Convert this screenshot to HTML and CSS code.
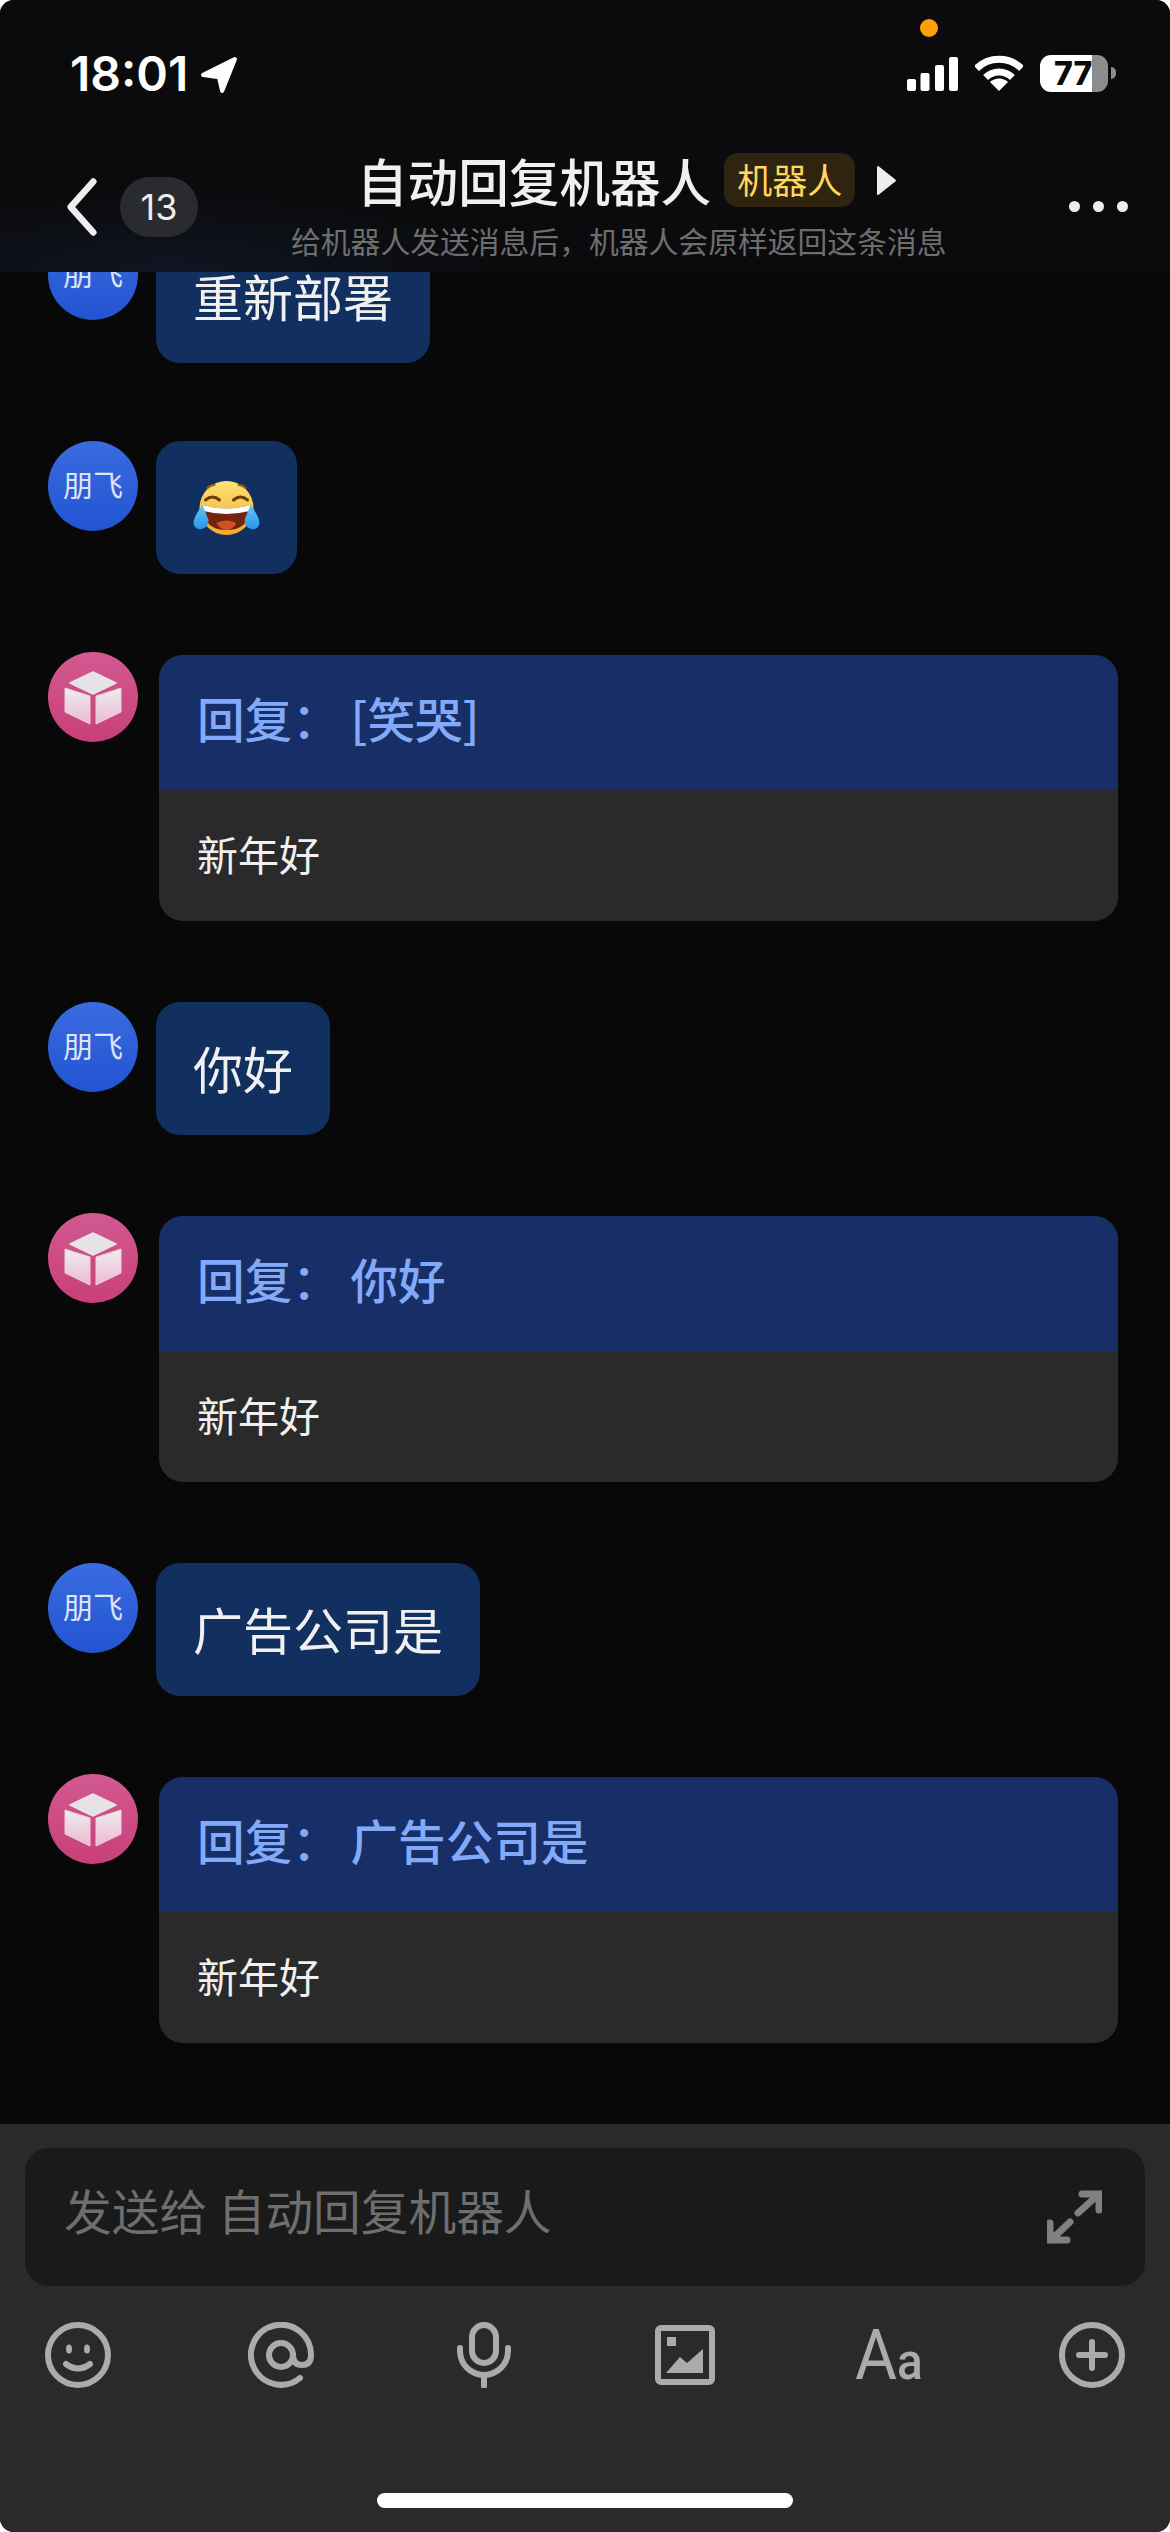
FILE: index.html
```html
<!DOCTYPE html>
<html>
<head>
    <title>自动回复机器人</title>
    <link rel="stylesheet" href="styles.css">
</head>
<body>
    <div class="screen">
        <header class="topbar">
            <div class="status">
                <span class="time">18:01</span>
                <svg class="loc" viewBox="0 0 36 36"><path d="M33 3 3 18l15 2 3 13z" fill="#fff" stroke="#fff" stroke-width="4" stroke-linejoin="round"/></svg>
                <span class="orange-dot"></span>
                <svg class="signal" viewBox="0 0 51 34">
                    <rect x="0" y="22" width="9" height="12" rx="2"/>
                    <rect x="13.500" y="16" width="9" height="18" rx="2"/>
                    <rect x="28" y="8" width="9" height="26" rx="2"/>
                    <rect x="42" y="0" width="9" height="34" rx="2"/>
                </svg>
                <svg class="wifi" viewBox="0 0 48 36">
                    <path d="M1.500 13.500a32 32 0 0 1 45 0" fill="none" stroke="#fff" stroke-width="7"/>
                    <path d="M10.600 22.600a19 19 0 0 1 26.800 0" fill="none" stroke="#fff" stroke-width="7"/>
                    <path d="M24 36 15 27a13 13 0 0 1 18 0z" fill="#fff"/>
                </svg>
                <div class="battery"><span>77</span></div>
                <span class="battery-nub"></span>
            </div>
            <div class="nav">
                <div class="nav-left">
                    <svg class="back" viewBox="0 0 34 62"><path d="M29 4 5 31l24 27" fill="none" stroke="#eee" stroke-width="7" stroke-linecap="round" stroke-linejoin="round"/></svg>
                    <span class="count">13</span>
                </div>
                <div class="nav-center">
                    <div class="title-row">
                        <span class="title">自动回复机器人</span>
                        <span class="tag">机器人</span>
                        <svg class="caret" viewBox="0 0 19 29"><path d="M1 1v27l17-13.500z" fill="#eee" stroke="#eee" stroke-width="2" stroke-linejoin="round"/></svg>
                    </div>
                    <div class="subtitle">给机器人发送消息后，机器人会原样返回这条消息</div>
                </div>
                <div class="more"><i></i><i></i><i></i></div>
            </div>
        </header>

        <main class="chat">
            <div class="msg">
                <div class="avatar avatar-user">朋飞</div>
                <div class="bubble">重新部署</div>
            </div>
            <div class="msg">
                <div class="avatar avatar-user">朋飞</div>
                <div class="bubble bubble-emoji">
                    <svg class="emoji" viewBox="0 0 68 54">
                        <defs>
                            <linearGradient id="face" x1="0" y1="0" x2="0" y2="1"><stop offset="0" stop-color="#fde273"/><stop offset="1" stop-color="#f3a92b"/></linearGradient>
                            <linearGradient id="tear" x1="0" y1="0" x2="0" y2="1"><stop offset="0" stop-color="#62c8f5"/><stop offset="1" stop-color="#2a94ec"/></linearGradient>
                        </defs>
                        <circle cx="34" cy="27" r="27" fill="url(#face)"/>
                        <path d="M15 7q3-3 7-3M46 4q4 0 7 3" fill="none" stroke="#9a6012" stroke-width="2" stroke-linecap="round"/>
                        <path d="M13 19q7-6 14 0M41 19q7-6 14 0" fill="none" stroke="#6b3c0a" stroke-width="3" stroke-linecap="round"/>
                        <path d="M10 24q24 7 48 0 0 25-24 25T10 24z" fill="#73240e"/>
                        <path d="M24 42q10-5 20 0-4 7-10 7t-10-7z" fill="#d4501f"/>
                        <path d="M10 24q24 7 48 0l-1 6q-23 6-46 0z" fill="#fff"/>
                        <path d="M10 24q-9 12-9 18 1 7 8 6 7-1 7-9z" fill="url(#tear)"/>
                        <path d="M58 24q9 12 9 18-1 7-8 6-7-1-7-9z" fill="url(#tear)"/>
                    </svg>
                </div>
            </div>
            <div class="msg msg-bot">
                <div class="avatar avatar-bot">
                    <svg class="cube" viewBox="0 0 90 90">
                        <defs><linearGradient id="cubefill" x1="0" y1="0" x2="0" y2="1"><stop offset="0" stop-color="#eee"/><stop offset="1" stop-color="#eeb9d2"/></linearGradient></defs>
                        <path d="M45 20 68 31 45 42 22 31z" fill="#e6e2e6" stroke="#e6e2e6" stroke-width="1.500" stroke-linejoin="round"/>
                        <path d="M17 36 42 44V72L17 60z" fill="url(#cubefill)" stroke="#e6d0dc" stroke-linejoin="round"/>
                        <path d="M73 36 48 44V72L73 60z" fill="url(#cubefill)" stroke="#e6d0dc" stroke-linejoin="round"/>
                    </svg>
                </div>
                <div class="card">
                    <div class="card-head">回复： [笑哭]</div>
                    <div class="card-body">新年好</div>
                </div>
            </div>
            <div class="msg">
                <div class="avatar avatar-user">朋飞</div>
                <div class="bubble">你好</div>
            </div>
            <div class="msg msg-bot">
                <div class="avatar avatar-bot">
                    <svg class="cube" viewBox="0 0 90 90">
                        <path d="M45 20 68 31 45 42 22 31z" fill="#e6e2e6" stroke="#e6e2e6" stroke-width="1.500" stroke-linejoin="round"/>
                        <path d="M17 36 42 44V72L17 60z" fill="url(#cubefill)" stroke="#e6d0dc" stroke-linejoin="round"/>
                        <path d="M73 36 48 44V72L73 60z" fill="url(#cubefill)" stroke="#e6d0dc" stroke-linejoin="round"/>
                    </svg>
                </div>
                <div class="card">
                    <div class="card-head">回复： 你好</div>
                    <div class="card-body">新年好</div>
                </div>
            </div>
            <div class="msg">
                <div class="avatar avatar-user">朋飞</div>
                <div class="bubble">广告公司是</div>
            </div>
            <div class="msg msg-bot">
                <div class="avatar avatar-bot">
                    <svg class="cube" viewBox="0 0 90 90">
                        <path d="M45 20 68 31 45 42 22 31z" fill="#e6e2e6" stroke="#e6e2e6" stroke-width="1.500" stroke-linejoin="round"/>
                        <path d="M17 36 42 44V72L17 60z" fill="url(#cubefill)" stroke="#e6d0dc" stroke-linejoin="round"/>
                        <path d="M73 36 48 44V72L73 60z" fill="url(#cubefill)" stroke="#e6d0dc" stroke-linejoin="round"/>
                    </svg>
                </div>
                <div class="card">
                    <div class="card-head">回复： 广告公司是</div>
                    <div class="card-body">新年好</div>
                </div>
            </div>
        </main>

        <footer class="composer">
            <div class="input">
                <span class="placeholder">发送给 自动回复机器人</span>
                <svg class="expand" viewBox="0 0 55 54">
                    <path d="M31 23 52 4M35 4H52V20M23 32 4 50M3 33V50H20" fill="none" stroke="#808080" stroke-width="7" stroke-linecap="round" stroke-linejoin="miter"/>
                </svg>
            </div>
            <div class="tools">
                <svg class="tool" viewBox="0 0 66 66">
                    <circle cx="33" cy="33" r="30"/>
                    <ellipse class="solid" cx="24" cy="27" rx="3" ry="4.500"/>
                    <ellipse class="solid" cx="42" cy="27" rx="3" ry="4.500"/>
                    <path d="M21 42q12 9 24 0"/>
                </svg>
                <svg class="tool" viewBox="0 0 66 66">
                    <path d="M52 56A30 30 0 1 1 63 33Q63 43 54 43 45 43 45 33"/>
                    <circle cx="33" cy="33" r="12"/>
                </svg>
                <svg class="tool" viewBox="0 0 66 66">
                    <rect x="21" y="3" width="24" height="38" rx="12"/>
                    <path d="M9 26v3a24 24 0 0 0 48 0v-3M33 54v10"/>
                </svg>
                <svg class="tool" viewBox="0 0 66 66">
                    <rect x="5" y="6" width="54" height="54" rx="3"/>
                    <rect class="solid" x="14" y="15" width="9" height="9"/>
                    <path class="solid" d="M13 51 27 35l7 6 16-14v24z"/>
                </svg>
                <div class="tool-font"><span class="big">A</span><span class="small">a</span></div>
                <svg class="tool" viewBox="0 0 66 66">
                    <circle cx="33" cy="33" r="30"/>
                    <path d="M33 20v26M20 33h26"/>
                </svg>
            </div>
            <div class="home-bar"></div>
        </footer>
    </div>
</body>
</html>
```

FILE: styles.css
```css
body {
    margin: 0;
    background: #fff;
    font-family: "Noto Sans CJK SC", "Liberation Sans", sans-serif;
}

.screen {
    width: 1170px;
    height: 2532px;
    display: flex;
    flex-direction: column;
    overflow: hidden;
    border-radius: 14px;
    background: #080808;
}

/* top bar */
.topbar {
    height: 272px;
    flex-shrink: 0;
    box-sizing: border-box;
    background: radial-gradient(ellipse 340px 80px at 170px 272px, #0f1522, rgba(12, 12, 14, 0) 100%), #0b0b0d;
    position: relative;
    z-index: 2;
}

.status {
    height: 153px;
    box-sizing: border-box;
    padding: 55px 0 0 70px;
    display: flex;
    align-items: flex-start;
    color: #fff;
}

.time {
    font-family: Inter, sans-serif;
    font-weight: 600;
    font-size: 48px;
    line-height: 38px;
    width: 130px;
}

.loc {
    width: 38px;
    height: 38px;
    margin-top: 1px;
}

.orange-dot {
    position: absolute;
    left: 920px;
    top: 19px;
    width: 18px;
    height: 18px;
    border-radius: 50%;
    background: #ff9f0a;
}

.signal {
    width: 51px;
    height: 34px;
    margin: 2px 0 0 669px;
    fill: #fff;
}

.wifi {
    width: 48px;
    height: 36px;
    margin-left: 17px;
}

.battery {
    width: 68px;
    height: 37px;
    margin-left: 17px;
    border-radius: 11px;
    background: linear-gradient(to right, #fff 52px, #8c8c8c 52px);
    overflow: hidden;
    display: flex;
    align-items: center;
}

.battery span {
    padding-left: 14px;
    font-family: Inter, sans-serif;
    font-weight: 800;
    font-size: 32px;
    color: #0b0b0d;
}

.battery-nub {
    width: 5px;
    height: 12px;
    margin: 12px 0 0 3px;
    border-radius: 0 6px 6px 0;
    background: #8c8c8c;
}

.nav {
    display: flex;
    align-items: flex-start;
    padding: 0 42px 0 66px;
}

.nav-left {
    display: flex;
    align-items: center;
    gap: 22px;
    margin: 24px 93px 0 0;
}

.back {
    width: 32px;
    height: 60px;
}

.count {
    width: 78px;
    height: 60px;
    line-height: 60px;
    border-radius: 30px;
    background: #2a2b2e;
    color: #eee;
    text-align: center;
    font-family: Inter, sans-serif;
    font-size: 36px;
}

.nav-center {
    width: 652px;
}

.title-row {
    display: flex;
    align-items: center;
    height: 54px;
    padding-left: 66px;
}

.title {
    color: #f0f0f0;
    font-size: 50.600px;
    font-weight: 500;
    line-height: 54px;
    white-space: nowrap;
}

.tag {
    margin-left: 13px;
    width: 131px;
    height: 54px;
    line-height: 52px;
    border-radius: 14px;
    background: #2e2410;
    color: #ffd75e;
    font-size: 35px;
    text-align: center;
}

.caret {
    width: 19px;
    height: 29px;
    margin-left: 22px;
}

.subtitle {
    margin-top: 15px;
    color: #6e6e6e;
    font-size: 29.800px;
    line-height: 36px;
    white-space: nowrap;
}

.more {
    display: flex;
    gap: 13px;
    margin: 48px 0 0 auto;
}

.more i {
    width: 11px;
    height: 11px;
    border-radius: 50%;
    background: #eee;
}

/* messages */
.chat {
    flex: 1;
    min-height: 0;
    display: flex;
    flex-direction: column;
    justify-content: flex-end;
    padding: 0 52px 81px 48px;
    overflow: hidden;
}

.msg {
    display: flex;
    flex-shrink: 0;
    align-items: flex-start;
    gap: 18px;
    margin-top: 78px;
}

.msg-bot {
    gap: 21px;
}

.msg-bot + .msg {
    margin-top: 81px;
}

.avatar {
    width: 90px;
    height: 90px;
    flex-shrink: 0;
    border-radius: 50%;
    color: #dde4f5;
    font-size: 30px;
    line-height: 85px;
    text-align: center;
}

.avatar-user {
    background: linear-gradient(#3a6be0, #2254d2);
}

.avatar-bot {
    background: linear-gradient(#d15a90, #c93f79);
}

.cube {
    display: block;
    width: 90px;
    height: 90px;
}

.bubble {
    padding: 30px 37px;
    height: 73px;
    line-height: 71px;
    border-radius: 24px;
    background: #12305f;
    color: #f0f0f0;
    font-size: 50px;
    white-space: nowrap;
}

.bubble-emoji {
    padding: 40px 36px 39px;
    height: 54px;
}

.emoji {
    display: block;
    width: 69px;
    height: 54px;
}

.card {
    flex: 1;
    margin-top: 3px;
    border-radius: 24px;
    overflow: hidden;
    background: #2a2a2a;
}

.card-head {
    height: 135px;
    line-height: 126px;
    padding-left: 38px;
    background: #172f66;
    color: #82aaf8;
    font-size: 47.600px;
    font-weight: 500;
}

.card-body {
    height: 131px;
    line-height: 127px;
    padding-left: 38px;
    color: #f0f0f0;
    font-size: 41px;
}

/* bottom input */
.composer {
    height: 408px;
    flex-shrink: 0;
    box-sizing: border-box;
    padding: 24px 25px 0;
    background: #2a2a2a;
}

.input {
    height: 138px;
    box-sizing: border-box;
    padding: 0 43px 0 39px;
    display: flex;
    align-items: center;
    justify-content: space-between;
    border-radius: 24px;
    background: #1a1a1a;
}

.placeholder {
    color: #6e6e6e;
    font-size: 47.700px;
    line-height: 56px;
    margin-top: -15px;
}

.expand {
    width: 55px;
    height: 54px;
}

.tools {
    display: flex;
    justify-content: space-between;
    margin: 36px 20px 0;
}

.tool {
    width: 66px;
    height: 66px;
    fill: none;
    stroke: #ababab;
    stroke-width: 6;
    stroke-linecap: round;
    stroke-linejoin: round;
}

.tool .solid {
    fill: #ababab;
    stroke: none;
}

.tool-font {
    width: 66px;
    height: 66px;
    display: flex;
    align-items: baseline;
    justify-content: center;
    color: #ababab;
    font-family: Roboto, sans-serif;
    line-height: 66px;
    transform: scaleX(0.92);
}

.tool-font .big {
    font-size: 70px;
}

.tool-font .small {
    font-size: 52px;
    font-weight: 500;
}

.home-bar {
    width: 416px;
    height: 15px;
    margin: 105px auto 0;
    border-radius: 8px;
    background: #fff;
}
```
